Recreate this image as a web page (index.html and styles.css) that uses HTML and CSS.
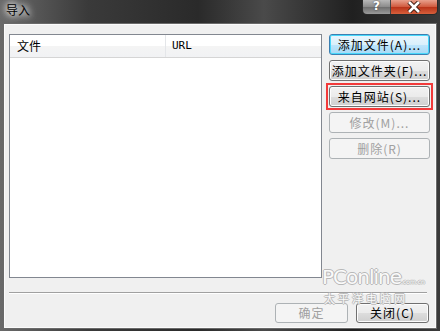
FILE: index.html
```html
<html>
    <head>
        <meta charset="UTF-8">
        <link rel="stylesheet" href="styles.css">
    </head>

    <body>
        <div class="window">
            <div class="titlebar">
                <span class="title">导入</span>
                <div class="caption-buttons">
                    <div class="cap-help">?</div>
                    <div class="cap-close">
                        <svg width="16" height="12" viewBox="0 0 16 12">
                            <path d="M3 1 L13 11 M13 1 L3 11" stroke="#3a1a10" stroke-width="4.5"/>
                            <path d="M3 1 L13 11 M13 1 L3 11" stroke="#fff" stroke-width="2.6"/>
                        </svg>
                    </div>
                </div>
            </div>

            <div class="client">
                <div class="main">
                    <div class="listbox">
                        <div class="list-header">
                            <div class="col col-file">文件</div>
                            <div class="col col-url">URL</div>
                        </div>
                    </div>

                    <div class="side-buttons">
                        <button class="btn btn-default">添加文件(A)...</button>
                        <button class="btn">添加文件夹(F)...</button>
                        <div class="highlight">
                            <button class="btn">来自网站(S)...</button>
                        </div>
                        <button class="btn" disabled>修改(M)...</button>
                        <button class="btn" disabled>删除(R)</button>
                    </div>
                </div>

                <div class="separator"></div>

                <div class="footer">
                    <button class="btn btn-small" disabled>确定</button>
                    <button class="btn btn-small">关闭(C)</button>
                </div>

                <div class="watermark">
                    <div class="wm-logo">PConline<span class="wm-dom">.com.cn</span></div>
                    <div class="wm-cn">太平洋电脑网</div>
                </div>
            </div>
        </div>
    </body>
</html>
```

FILE: styles.css
```css
body {
    margin: 0;
    width: 440px;
    height: 331px;
    overflow: hidden;
    font-family: "Noto Sans CJK SC", "DejaVu Sans", sans-serif;
    font-size: 12px;
}

.window {
    width: 440px;
    height: 331px;
    box-sizing: border-box;
    background: linear-gradient(90deg, #6a6a6a 0%, #3a3a3a 20%, #2a2a2a 45%, #4a4a4a 60%, #202020 80%, #3a3a3a 100%);
    padding: 0 3px 2px 3px;
    display: flex;
    flex-direction: column;
    position: relative;
}

.titlebar {
    height: 23px;
    display: flex;
    align-items: flex-start;
    justify-content: space-between;
}

.title {
    color: #000;
    font-size: 12px;
    line-height: 12px;
    padding: 4px 0 0 3px;
    text-shadow: 0 0 6px #fff, 0 0 8px #fff, 0 0 10px #ddd;
}

.caption-buttons {
    display: flex;
    margin-right: -1px;
    border: 1px solid #2a2a2a;
    border-top: 0;
    border-radius: 0 0 5px 5px;
    overflow: hidden;
    height: 14px;
}

.cap-help {
    width: 27px;
    background: linear-gradient(#b8b8b8, #8a8a8a 50%, #6e6e6e 51%, #9a9a9a);
    color: #fff;
    font-weight: bold;
    font-family: "DejaVu Sans", sans-serif;
    font-size: 12px;
    line-height: 13px;
    text-align: center;
    border-right: 1px solid #444;
    text-shadow: 0 0 2px #333;
}

.cap-close {
    width: 46px;
    background: linear-gradient(#e8a08c, #d0583c 50%, #b83218 51%, #d8603c);
    display: flex;
    justify-content: center;
    align-items: center;
}

.client {
    flex: 1;
    background: #f0f0f0;
    border: 1px solid #6a6a6a;
    box-shadow: inset 0 0 0 1px #fbfbfb;
    padding: 10px 5px 0 5px;
    display: flex;
    flex-direction: column;
    position: relative;
}

.main {
    display: flex;
    height: 244px;
}

.listbox {
    width: 311px;
    height: 242px;
    background: #fff;
    border: 1px solid #828790;
}

.list-header {
    display: flex;
    height: 22px;
    border-bottom: 1px solid #d5d5d5;
    background: linear-gradient(#ffffff, #ffffff 50%, #f4f4f4 51%, #f1f2f4);
}

.col {
    line-height: 22px;
    padding-left: 7px;
    box-sizing: border-box;
}

.col-file {
    width: 156px;
    border-right: 1px solid #e4e6e9;
}

.col-url {
    font-family: "DejaVu Sans Mono", monospace;
    font-size: 11px;
    padding-left: 6px;
}

.side-buttons {
    margin-left: 7px;
    display: flex;
    flex-direction: column;
    gap: 5px;
}

.btn {
    width: 101px;
    height: 21px;
    padding: 0;
    font-family: "Noto Sans CJK SC", "DejaVu Sans", sans-serif;
    font-size: 12px;
    line-height: 19px;
    color: #000;
    border: 1px solid #707070;
    border-radius: 3px;
    background: linear-gradient(#f2f2f2, #ebebeb 50%, #dddddd 51%, #cfcfcf);
    box-shadow: inset 0 0 0 1px #fcfcfc;
    letter-spacing: 1px;
}

.btn-default {
    border-color: #3c7fb1;
    background: linear-gradient(#eaf6fd, #d9f0fc 50%, #bee6fd 51%, #a7d9f5);
    box-shadow: inset 0 0 0 1px #48d8fb;
}

.btn:disabled {
    color: #a0a0a0;
    border-color: #adb2b5;
    background: #f4f4f4;
    box-shadow: none;
}

.highlight {
    margin: -3px -3px;
    border: 2px solid #f23a3a;
    padding: 1px;
    width: 101px;
}

.separator {
    margin: 14px 4px 0 0;
    height: 1px;
    background: #a0a0a0;
    border-bottom: 1px solid #fff;
}

.footer {
    display: flex;
    justify-content: flex-end;
    gap: 8px;
    margin: 9px 2px 0 0;
}

.btn-small {
    width: 73px;
    height: 20px;
    line-height: 18px;
}

.watermark {
    position: absolute;
    left: 318px;
    top: 242px;
    color: #fafafa;
    text-shadow: 1px 0 0 #b8b8b8, -1px 0 0 #b8b8b8, 0 1px 0 #b8b8b8, 0 -1px 0 #b8b8b8;
    pointer-events: none;
}

.wm-logo {
    font-family: "DejaVu Sans", sans-serif;
    font-size: 20px;
    line-height: 22px;
    letter-spacing: -1px;
}

.wm-dom {
    font-size: 6px;
    letter-spacing: 0;
}

.wm-cn {
    font-size: 11px;
    line-height: 11px;
    letter-spacing: 3px;
    padding-left: 2px;
}
```
